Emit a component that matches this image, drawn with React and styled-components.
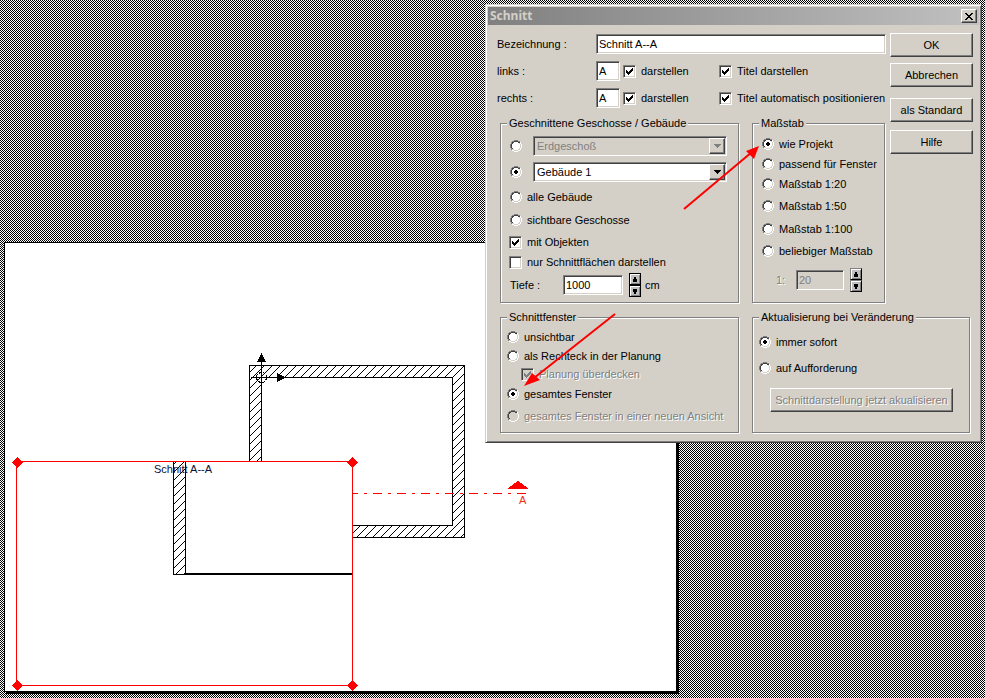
import { useState } from "react";
import styled, { createGlobalStyle } from "styled-components";

const svgUrl = (size, body) =>
  `url("data:image/svg+xml,${encodeURIComponent(
    `<svg xmlns="http://www.w3.org/2000/svg" width="${size}" height="${size}" shape-rendering="crispEdges">${body}</svg>`
  )}")`;

const ditherImage = svgUrl(8, `<path fill="#fff" d="M0 0h8v8H0z"/><path d="${[0, 1, 2, 3, 4, 5, 6, 7]
  .map((y) => [0, 2, 4, 6].map((x) => `M${x + (y % 2)} ${y}h1v1h-1z`).join(""))
  .join("")}"/>`);

const radioImage = (fill, dot) =>
  svgUrl(
    12,
    `<path fill="${fill}" d="M4 2h4v1h1v1h1v4H9v1H8v1H4V9H3V8H2V4h1V3h1z"/>
    <path fill="#808080" d="M4 0h4v1h2v1H8V1H4v1H2v2H1v4h1v2H1V8H0V4h1V2h1V1h2z"/>
    <path fill="#404040" d="M4 1h4v1h2v1H8V2H4v1H3v1H2v4h1v1H2V8H1V4h1V2h2z"/>
    <path fill="#fff" d="M10 2h1v2h1v4h-1v2h-1v1H8v1H4v-1H2v-1h2v1h4v-1h2V8h1V4h-1z"/>
    ${dot ? `<path fill="${dot}" d="M5 4h2v1h1v2H7v1H5V7H4V5h1z"/>` : ""}`
  );

const checkImage = (color) =>
  svgUrl(7, `<path fill="${color}" d="M7 0H6v1H5v1H4v1H3v1H2V3H1V2H0v3h1v1h1v1h1V6h1V5h1V4h1V3h1z"/>`);

function Check({ label, ...rest }) {
  return (
    <Choice $disabled={rest.disabled}>
      <CheckInput type="checkbox" {...rest} />
      {label}
    </Choice>
  );
}

function Radio({ label, ...rest }) {
  return (
    <Choice $disabled={rest.disabled}>
      <RadioInput type="radio" {...rest} />
      {label}
    </Choice>
  );
}

function Combo({ options, ...rest }) {
  return (
    <ComboBox>
      <ComboSelect {...rest}>
        {options.map((o) => (
          <option key={o}>{o}</option>
        ))}
      </ComboSelect>
      <ComboArrow $disabled={rest.disabled}>
        <svg width="7" height="4" shapeRendering="crispEdges">
          <path d="M0 0h7v1H6v1H5v1H4v1H3V3H2V2H1V1H0z" fill="currentColor" />
        </svg>
      </ComboArrow>
    </ComboBox>
  );
}

function Spinner({ onStep, disabled }) {
  return (
    <SpinnerBox>
      <SpinButton type="button" aria-label="mehr" disabled={disabled} onClick={() => onStep(1)}>
        <svg width="4" height="5" shapeRendering="crispEdges">
          <path d="M1 0h2v2h1v3H0V2h1z" fill="#000" />
        </svg>
      </SpinButton>
      <SpinButton type="button" aria-label="weniger" disabled={disabled} onClick={() => onStep(-1)}>
        <svg width="4" height="5" shapeRendering="crispEdges">
          <path d="M0 0h4v3H3v2H1V3H0z" fill="#000" />
        </svg>
      </SpinButton>
    </SpinnerBox>
  );
}

function Handle({ x, y }) {
  return <path d={`M${x - 5.5} ${y}l5.5 -5.5l5.5 5.5l-5.5 5.5z`} fill="#f00" />;
}

function Plan() {
  return (
    <Paper>
      <svg width="671" height="448" viewBox="5 243 671 448" shapeRendering="crispEdges">
        <defs>
          <pattern id="hatch" x="6" width="8" height="8" patternUnits="userSpaceOnUse">
            {[0, 1, 2, 3, 4, 5, 6, 7].map((i) => (
              <rect key={i} x={i} y={7 - i} width="1" height="1" />
            ))}
          </pattern>
        </defs>

        {/* floor plan */}
        <path
          d="M249.5 365.5H464.5V537.5H249.5zM261.5 377.5V525.5H452.5V377.5z"
          fill="url(#hatch)"
          stroke="#000"
        />
        <path d="M251 377.5H262M261.5 356V378" stroke="#000" />
        <circle cx="261.5" cy="377.5" r="5" fill="none" stroke="#000" strokeDasharray="3 1" />
        <path d="M261.5 353L266 362H257zM286 377.5L277 382V373z" />

        {/* section line */}
        <path d="M353 493.5H527" stroke="#f00" strokeDasharray="9 6 3 6" strokeDashoffset="4" />
        <path d="M518 481L528 488V489H508V488z" fill="#f00" />
        <PlanText x="519" y="504" fill="#f03010">A</PlanText>

        {/* section view */}
        <rect x="16.5" y="461.5" width="336" height="224" fill="#fff" />
        <path d="M173.5 462V574.5H185.5V462" fill="url(#hatch)" stroke="#000" />
        <path d="M185 574H352" stroke="#000" strokeWidth="2" />
        <rect x="16.5" y="461.5" width="336" height="224" fill="none" stroke="#f00" />
        <PlanText x="154" y="473" fill="#101038">Schnitt A--A</PlanText>
        <Handle x={17.5} y={462.5} />
        <Handle x={352.5} y={462.5} />
        <Handle x={17.5} y={685.5} />
        <Handle x={352.5} y={685.5} />
      </svg>
    </Paper>
  );
}

const scales = ["wie Projekt", "passend für Fenster", "Maßstab 1:20", "Maßstab 1:50", "Maßstab 1:100", "beliebiger Maßstab"];

function SectionDialog() {
  const [storey, setStorey] = useState("gebaeude");
  const [scale, setScale] = useState("wie Projekt");
  const [frame, setFrame] = useState("gesamt");
  const [update, setUpdate] = useState("sofort");
  const [depth, setDepth] = useState(1000);

  return (
    <Dialog role="dialog" aria-labelledby="dialog-title">
      <TitleBar>
        <Title id="dialog-title">Schnitt</Title>
        <CloseButton type="button" aria-label="Schließen">
          <svg width="8" height="7" shapeRendering="crispEdges">
            <path
              d="M0 0h2v1h1v1h2V1h1V0h2v1H7v1H6v1H5v1h1v1h1v1h1v1H6V6H5V5H3v1H2v1H0V6h1V5h1V4h1V3H2V2H1V1H0z"
              fill="#000"
            />
          </svg>
        </CloseButton>
      </TitleBar>

      <Upper>
        <Main>
          <Fields>
            <Field>
              <FieldLabel htmlFor="name">Bezeichnung :</FieldLabel>
              <TextInput id="name" defaultValue="Schnitt A--A" />
            </Field>
            <Field>
              <FieldLabel htmlFor="left">links :</FieldLabel>
              <TextInput id="left" $width="24px" defaultValue="A" />
              <CheckCell>
                <Check label="darstellen" defaultChecked />
              </CheckCell>
              <Check label="Titel darstellen" defaultChecked />
            </Field>
            <Field>
              <FieldLabel htmlFor="right">rechts :</FieldLabel>
              <TextInput id="right" $width="24px" defaultValue="A" />
              <CheckCell>
                <Check label="darstellen" defaultChecked />
              </CheckCell>
              <Check label="Titel automatisch positionieren" defaultChecked />
            </Field>
          </Fields>

          <Groups>
            <Group $rows="26px 26px 24px 22px 22px 18px 28px">
              <Legend>Geschnittene Geschosse / Gebäude</Legend>
              <ComboRow>
                <RadioInput
                  type="radio"
                  name="storey"
                  aria-label="Geschoss"
                  checked={storey === "geschoss"}
                  onChange={() => setStorey("geschoss")}
                />
                <Combo aria-label="Geschoss" disabled={storey !== "geschoss"} options={["Erdgeschoß"]} />
              </ComboRow>
              <ComboRow>
                <RadioInput
                  type="radio"
                  name="storey"
                  aria-label="Gebäude"
                  checked={storey === "gebaeude"}
                  onChange={() => setStorey("gebaeude")}
                />
                <Combo aria-label="Gebäude" disabled={storey !== "gebaeude"} options={["Gebäude 1"]} />
              </ComboRow>
              <Radio
                name="storey"
                label="alle Gebäude"
                checked={storey === "alle"}
                onChange={() => setStorey("alle")}
              />
              <Radio
                name="storey"
                label="sichtbare Geschosse"
                checked={storey === "sichtbar"}
                onChange={() => setStorey("sichtbar")}
              />
              <Check label="mit Objekten" defaultChecked />
              <Check label="nur Schnittflächen darstellen" />
              <NumberRow>
                <DepthLabel htmlFor="depth">Tiefe :</DepthLabel>
                <TextInput id="depth" $width="60px" value={depth} onChange={(e) => setDepth(Number(e.target.value) || 0)} />
                <Spinner onStep={(n) => setDepth(depth + n)} />
                <Unit>cm</Unit>
              </NumberRow>
            </Group>

            <Group $rows="21px 19px 21px 24px 21px 24px 34px">
              <Legend>Maßstab</Legend>
              {scales.map((s) => (
                <Radio key={s} name="scale" label={s} checked={scale === s} onChange={() => setScale(s)} />
              ))}
              <NumberRow $indent>
                <ScaleLabel htmlFor="ratio">1:</ScaleLabel>
                <TextInput id="ratio" $width="48px" defaultValue="20" disabled={scale !== "beliebiger Maßstab"} />
                <Spinner disabled onStep={() => {}} />
              </NumberRow>
            </Group>
          </Groups>
        </Main>

        <Actions>
          <Button type="button">OK</Button>
          <Button type="button">Abbrechen</Button>
          <Button type="button" $apart>als Standard</Button>
          <Button type="button">Hilfe</Button>
        </Actions>
      </Upper>

      <Lower>
        <Group $tight $rows="20px 18px 18px 22px 22px">
          <Legend $tight>Schnittfenster</Legend>
          <Radio name="frame" label="unsichtbar" checked={frame === "unsichtbar"} onChange={() => setFrame("unsichtbar")} />
          <Radio
            name="frame"
            label="als Rechteck in der Planung"
            checked={frame === "rechteck"}
            onChange={() => setFrame("rechteck")}
          />
          <Indented>
            <Check label="Planung überdecken" defaultChecked disabled />
          </Indented>
          <Radio name="frame" label="gesamtes Fenster" checked={frame === "gesamt"} onChange={() => setFrame("gesamt")} />
          <Radio name="frame" label="gesamtes Fenster in einer neuen Ansicht" disabled />
        </Group>

        <Group $tight $rows="30px 22px 41px">
          <Legend $tight>Aktualisierung bei Veränderung</Legend>
          <Radio name="update" label="immer sofort" checked={update === "sofort"} onChange={() => setUpdate("sofort")} />
          <Radio
            name="update"
            label="auf Aufforderung"
            checked={update === "aufforderung"}
            onChange={() => setUpdate("aufforderung")}
          />
          <UpdateCell>
            <Button type="button" $wide disabled={update === "sofort"}>
              Schnittdarstellung jetzt akualisieren
            </Button>
          </UpdateCell>
        </Group>
      </Lower>

      <Pointers viewBox="485 4 497 439" aria-hidden="true">
        <path d="M684 209L752 152M615 314L534 378" stroke="#f00" strokeWidth="2" />
        <path d="M759 146L754 159L746 151zM524 386L532 373L540 380z" fill="#f00" />
      </Pointers>
    </Dialog>
  );
}

function App() {
  return (
    <Desktop>
      <GlobalStyle />
      <Plan />
      <SectionDialog />
    </Desktop>
  );
}

const GlobalStyle = createGlobalStyle`
  * {
    box-sizing: border-box;
  }
  body {
    margin: 0;
    font: 11px/14px "Liberation Sans", Arial, sans-serif;
    color: #000;
  }
  input, select, button {
    font: inherit;
    color: inherit;
  }
`;

const Desktop = styled.main`
  position: relative;
  min-height: 100vh;
  overflow: hidden;
  background: ${ditherImage};
`;

const Paper = styled.div`
  position: absolute;
  left: 4px;
  top: 242px;
  background: #fff;
  border: 1px solid #000;
  box-shadow: 2px 2px 0 #000;
  svg {
    display: block;
  }
`;

const PlanText = styled.text`
  font-size: 11px;
`;

const Dialog = styled.section`
  position: absolute;
  left: 485px;
  top: 4px;
  width: 497px;
  padding: 1px;
  background: #d4d0c8;
  border: 1px solid;
  border-color: #d4d0c8 #404040 #404040 #d4d0c8;
  box-shadow: inset 1px 1px 0 #fff, inset -1px -1px 0 #808080;
`;

const TitleBar = styled.header`
  display: flex;
  align-items: center;
  justify-content: space-between;
  height: 18px;
  margin: 1px;
  padding: 0 2px;
  background: linear-gradient(90deg, #808080, #c0c0c0);
`;

const Title = styled.h1`
  margin: 0;
  font: bold 12px/18px "Noto Sans", Tahoma, sans-serif;
  color: #d4d0c8;
`;

const Button = styled.button`
  height: 24px;
  padding: ${(p) => (p.$wide ? "0 4px" : "0 8px")};
  background: #d4d0c8;
  border: 1px solid;
  border-color: #fff #404040 #404040 #fff;
  box-shadow: inset -1px -1px 0 #808080;
  margin: ${(p) => (p.$apart ? "5px 0 2px" : "0")};
  white-space: nowrap;
  &:disabled {
    color: #808080;
    text-shadow: 1px 1px 0 #fff;
  }
`;

const CloseButton = styled(Button)`
  display: flex;
  align-items: center;
  justify-content: center;
  width: 16px;
  height: 14px;
  padding: 0;
`;

const Upper = styled.div`
  display: flex;
  gap: 4px;
  padding: 7px 7px 0 10px;
`;

const Main = styled.div`
  flex: 1;
`;

const Actions = styled.div`
  display: flex;
  flex-direction: column;
  gap: 6px;
  width: 83px;
`;

const Fields = styled.div`
  display: grid;
  gap: 7px;
  padding-top: 1px;
`;

const Field = styled.div`
  display: flex;
  align-items: center;
`;

const FieldLabel = styled.label`
  width: 99px;
`;

const TextInput = styled.input`
  flex: ${(p) => (p.$width ? "none" : "1")};
  width: ${(p) => p.$width || "auto"};
  min-width: 0;
  height: 20px;
  padding: 0 2px;
  background: #fff;
  border: 1px solid;
  border-color: #808080 #fff #fff #808080;
  border-radius: 0;
  box-shadow: inset 1px 1px 0 #404040, inset -1px -1px 0 #d4d0c8;
  outline: none;
  &:disabled {
    color: #808080;
    background: #d4d0c8;
  }
`;

const CheckCell = styled.div`
  width: 96px;
  margin-left: 4px;
`;

const Choice = styled.label`
  display: flex;
  align-items: center;
  gap: 5px;
  white-space: nowrap;
  color: ${(p) => (p.$disabled ? "#808080" : "inherit")};
  text-shadow: ${(p) => (p.$disabled ? "1px 1px 0 #fff" : "none")};
`;

const CheckInput = styled.input`
  appearance: none;
  flex: none;
  width: 13px;
  height: 13px;
  margin: 0 0 0 -1px;
  background: #fff center / 7px 7px no-repeat;
  border: 1px solid;
  border-color: #808080 #fff #fff #808080;
  box-shadow: inset 1px 1px 0 #404040, inset -1px -1px 0 #d4d0c8;
  &:checked {
    background-image: ${checkImage("#000")};
  }
  &:disabled {
    background-color: #d4d0c8;
    background-image: ${checkImage("#808080")};
  }
`;

const RadioInput = styled.input`
  appearance: none;
  flex: none;
  width: 12px;
  height: 12px;
  margin: 0;
  background: ${radioImage("#fff")} no-repeat;
  &:checked {
    background-image: ${radioImage("#fff", "#000")};
  }
  &:disabled {
    background-image: ${radioImage("#d4d0c8")};
  }
`;

const Groups = styled.div`
  display: grid;
  grid-template-columns: 240px 1fr;
  gap: 12px;
  padding: 8px 0 0 3px;
`;

const Lower = styled.div`
  display: grid;
  grid-template-columns: 240px 1fr;
  gap: 12px;
  padding: 6px 9px 7px 13px;
`;

const Group = styled.fieldset`
  display: grid;
  grid-template-rows: ${(p) => p.$rows};
  align-items: center;
  align-content: start;
  min-width: 0;
  margin: 0 1px 1px 0;
  padding: ${(p) => (p.$tight ? "3px 6px 5px" : "3px 9px")};
  border: 1px solid #808080;
  box-shadow: 1px 1px 0 #fff, inset 1px 1px 0 #fff;
`;

const Legend = styled.legend`
  padding: 0 2px;
  margin-left: ${(p) => (p.$tight ? "0" : "-3px")};
  background: #d4d0c8;
`;

const ComboRow = styled.div`
  display: flex;
  align-items: center;
  gap: 11px;
`;

const ComboBox = styled.div`
  display: grid;
  flex: 1;
  margin-right: 2px;
`;

const ComboSelect = styled.select`
  grid-area: 1 / 1;
  appearance: none;
  height: 20px;
  padding: 0 20px 0 3px;
  background: #fff;
  border: 1px solid;
  border-color: #808080 #fff #fff #808080;
  border-radius: 0;
  box-shadow: inset 1px 1px 0 #404040, inset -1px -1px 0 #d4d0c8;
  outline: none;
  &:disabled {
    color: #808080;
    background: #d4d0c8;
    opacity: 1;
  }
`;

const ComboArrow = styled.span`
  grid-area: 1 / 1;
  display: flex;
  align-items: center;
  justify-content: center;
  justify-self: end;
  width: 16px;
  margin: 2px;
  color: ${(p) => (p.$disabled ? "#808080" : "#000")};
  background: #d4d0c8;
  border: 1px solid;
  border-color: #fff #404040 #404040 #fff;
  box-shadow: inset -1px -1px 0 #808080;
  pointer-events: none;
`;

const NumberRow = styled.div`
  display: flex;
  align-items: center;
  padding-left: ${(p) => (p.$indent ? "14px" : "0")};
`;

const DepthLabel = styled.label`
  width: 53px;
`;

const ScaleLabel = styled.label`
  width: 20px;
  color: #808080;
  text-shadow: 1px 1px 0 #fff;
`;

const SpinnerBox = styled.div`
  display: flex;
  flex-direction: column;
  width: 12px;
  margin-left: 6px;
`;

const SpinButton = styled.button`
  display: flex;
  align-items: center;
  justify-content: center;
  height: 12px;
  padding: 0;
  background: #c0c0c0;
  border: 1px solid #000;
  box-shadow: inset 1px 1px 0 #fff, inset -1px -1px 0 #808080;
  &:disabled {
    border-color: #808080 #000 #000 #808080;
  }
`;

const Unit = styled.span`
  margin-left: 4px;
`;

const Indented = styled.div`
  padding-left: 15px;
`;

const UpdateCell = styled.div`
  display: grid;
  margin: 0 10px 0 11px;
`;

const Pointers = styled.svg`
  position: absolute;
  left: -1px;
  top: -1px;
  width: 497px;
  height: 439px;
  pointer-events: none;
`;

export default App;
